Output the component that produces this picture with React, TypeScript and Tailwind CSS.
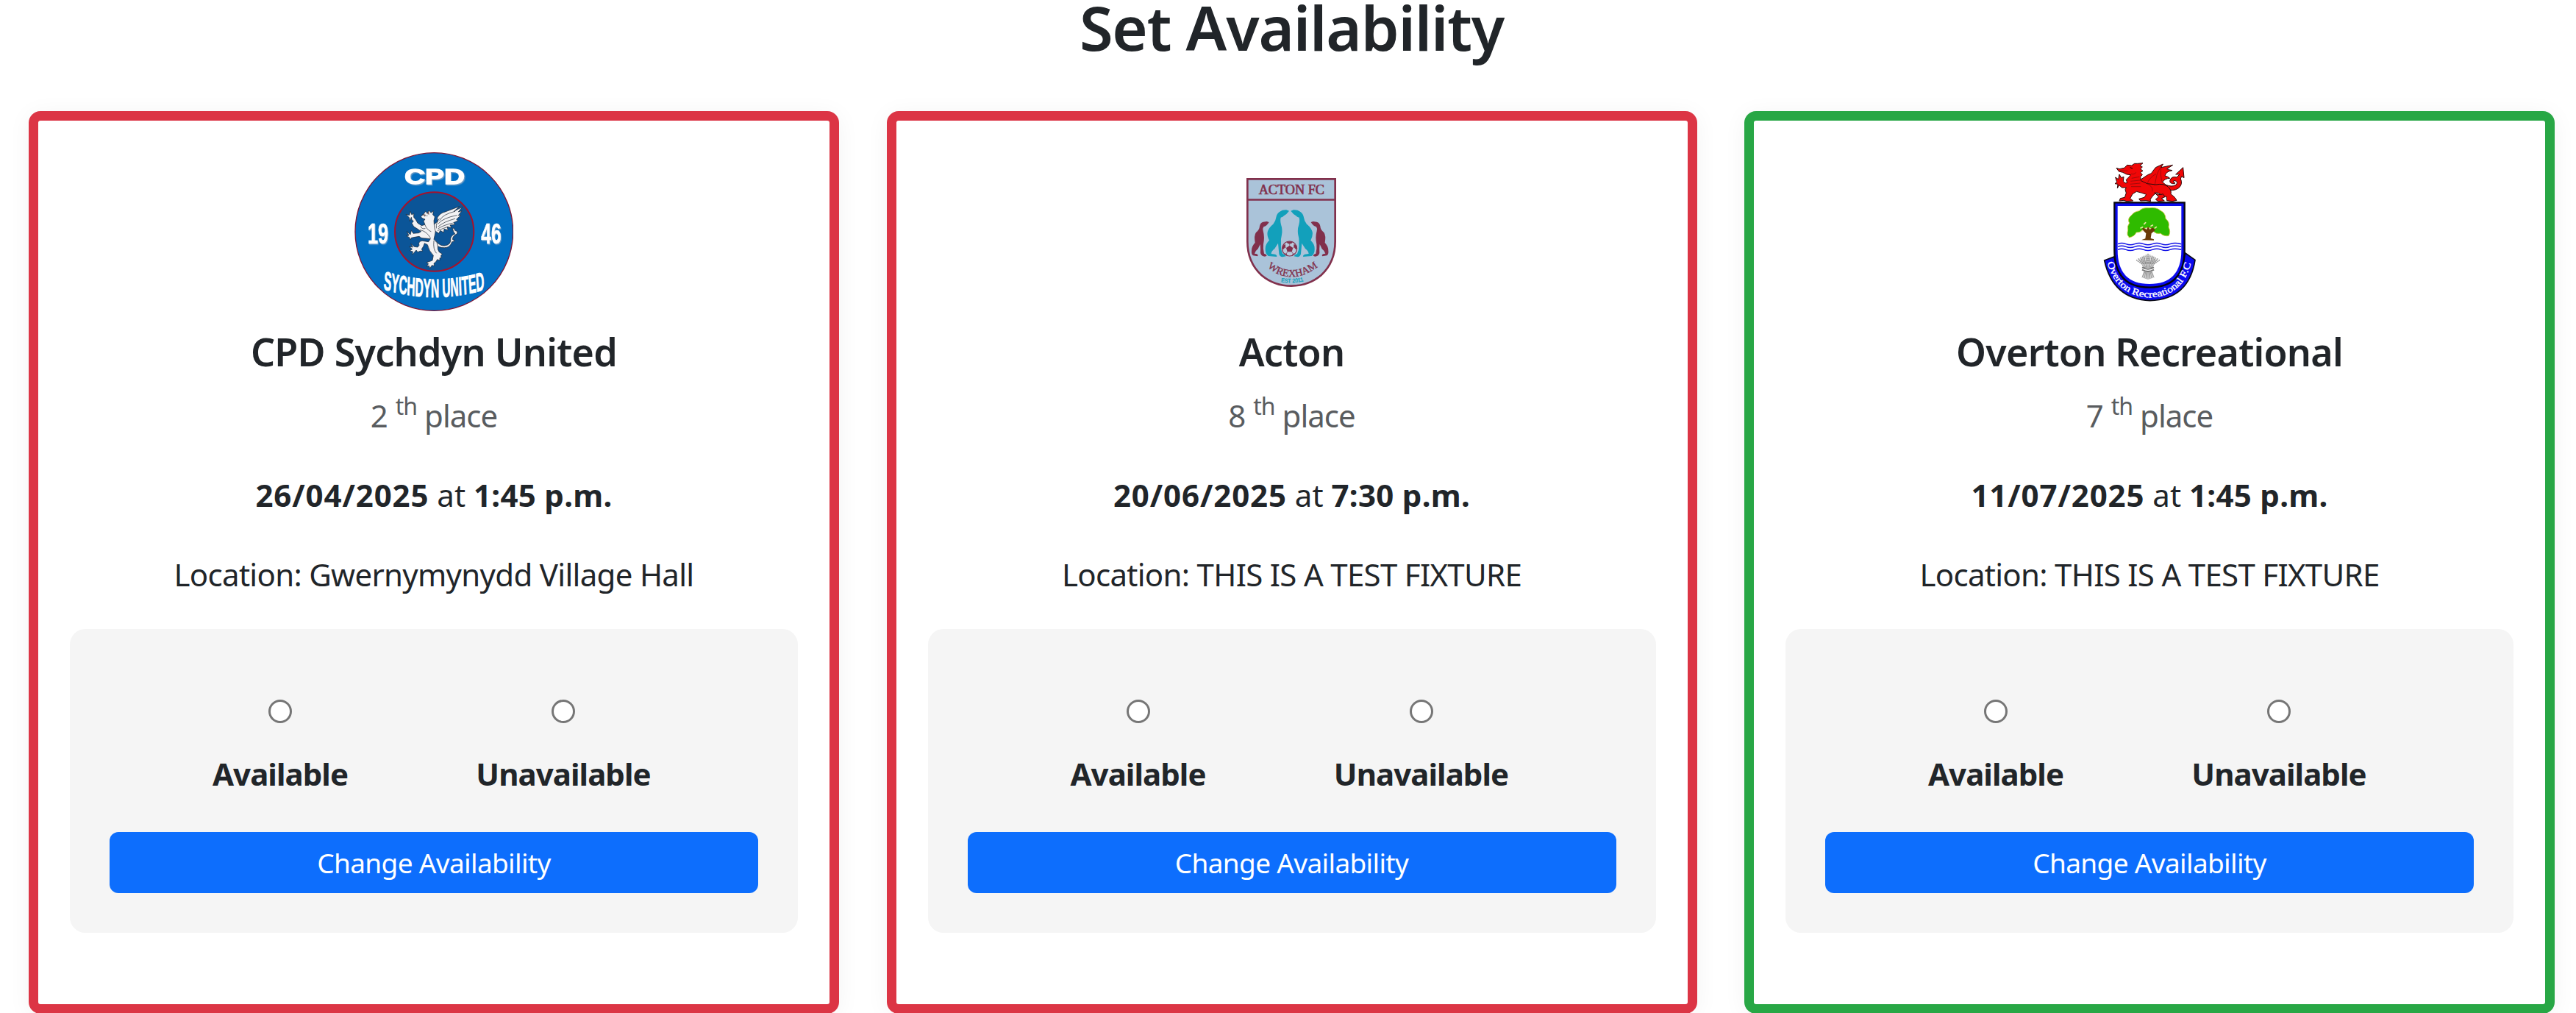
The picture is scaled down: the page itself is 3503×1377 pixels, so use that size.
import React from 'react';

function SychdynCrest() {
  return (
    <svg viewBox="36 36 648 648" className="size-[216px]" aria-label="CPD Sychdyn United crest">
      <circle cx="361" cy="360" r="322" fill="#0270c4" stroke="#7d1738" strokeWidth="4" />
      <circle cx="362" cy="360" r="161" fill="#0b5598" stroke="#a5122c" strokeWidth="6" />
      <g fontFamily="Liberation Sans" fontWeight="700" fill="#fff" stroke="#fff">
        <g fontSize="91" strokeWidth="4" className="drop-shadow-[4px_4px_0_#6f9dc6]">
          <text x="240" y="166" textLength="246" lengthAdjust="spacingAndGlyphs">CPD</text>
        </g>
        <g fontSize="118" strokeWidth="2" className="drop-shadow-[3px_4px_0_#6f9dc6]">
          <text x="90" y="408" textLength="84" lengthAdjust="spacingAndGlyphs">19</text>
          <text x="553" y="408" textLength="82" lengthAdjust="spacingAndGlyphs">46</text>
        </g>
        <path id="sychdyn-arc" d="M308 594 Q728 660 1148 594" fill="none" stroke="none" />
        <g transform="scale(.5 1)" fontSize="106" strokeWidth="3">
          <text textLength="830" lengthAdjust="spacingAndGlyphs"><textPath href="#sychdyn-arc" textLength="830" lengthAdjust="spacingAndGlyphs">SYCHDYN UNITED</textPath></text>
        </g>
      </g>
      <g transform="translate(210 195)" stroke="#17202c" strokeWidth="2" strokeLinejoin="round" strokeLinecap="round" fill="#f2f2f4">
        <path d="M158 204Q176 224 194 222Q222 218 218 194Q220 180 236 174L230 164L226 152L232 150L236 160L246 164L244 174L236 178Q226 186 226 196Q230 202 236 198Q232 208 224 206Q216 230 194 230Q170 232 154 214Z" />
        <path d="M148 138L166 122L164 108Q176 88 196 84L254 62L232 82L266 64L250 84L264 80L250 98L260 98L242 114L248 120L230 128L236 136L216 138L222 148L204 146L208 158L192 154L190 168L176 160L170 172L150 158Z" />
        <path d="M98 102L108 94L116 82L124 90L130 78L138 88L148 80L146 96L154 104L150 120L152 148Q160 162 154 178L150 196Q166 208 166 224Q164 238 172 248L184 256L178 264L182 270L174 272L174 282L164 278L158 288L150 294L152 304L142 302L134 314L130 304L120 306L128 296L120 290L134 286L144 282L148 262Q130 244 124 218L112 212Q108 226 100 236L104 244L94 244L84 248L78 240L68 252L62 258L64 246L52 242L62 236L50 226L64 228L56 214L70 226L84 228L90 220Q84 206 102 202L128 206L136 194L118 192Q98 194 90 184L72 187L58 190L54 198L50 188L38 182L48 180L40 164L54 177L58 160L66 172L88 170L98 164L84 154L68 144L60 130L67 122L60 116L58 106L52 122L50 108L36 94L50 98L54 82L60 96L68 90L68 106L76 116L84 130L100 140L114 136L108 122L114 114Q106 112 100 108Z" />
        <path d="M174 118Q186 94 236 82M168 132Q188 108 244 98M168 144Q190 124 236 112M168 152Q188 138 226 130M166 160L208 144M172 112Q158 128 160 150M114 138Q122 158 138 164M94 158Q120 162 136 190M96 144Q102 156 114 152M150 202Q146 238 160 252" fill="none" />
        <path d="M104 94L116 96L114 102ZM122 90L128 84L130 94Z" fill="#8c5a4d" strokeWidth="1" />
        <circle cx="122" cy="100" r="2" fill="#17202c" stroke="none" />
      </g>
    </svg>
  );
}

function ActonHounds() {
  return (
    <>
      <path
        fill="#12a0bb"
        d="M219 170L208 166Q192 165 181 173Q170 179 167 193Q165 210 154 224Q136 238 131 256Q128 272 138 290Q121 306 122 325Q121 345 134 354L168 357Q172 352 162 347L146 345Q146 335 160 324L174 302L178 345Q180 357 192 358L206 355Q204 348 193 345Q184 328 186 304Q184 286 189 268Q193 246 186 226Q181 206 186 196Q192 197 198 190Q208 185 219 170Z"
      />
      <path
        fill="#81304c"
        d="M137 216L128 213L113 215Q101 219 99 232Q98 248 84 258Q75 270 80 300Q66 314 66 332Q64 346 72 352L90 355Q95 350 87 346L78 344Q80 334 92 325L101 306Q103 322 102 342Q106 356 120 356L128 353Q126 346 117 344Q112 326 114 306Q120 276 113 252Q110 242 115 235Q128 232 137 216Z"
      />
    </>
  );
}

function ActonCrest() {
  return (
    <svg viewBox="-93 -69 648 648" className="size-[216px]" aria-label="Acton FC crest">
      <path d="M49 40H407V295Q407 380 350 432Q298 476 228 476Q158 476 106 432Q49 380 49 295Z" fill="#aac3d9" stroke="#81304c" strokeWidth="8" />
      <path d="M49 124.500H407" stroke="#81304c" strokeWidth="8" />
      <text x="95" y="101" fontFamily="Liberation Serif" fontSize="54" fill="#81304c" stroke="#81304c" strokeWidth="2" textLength="268" lengthAdjust="spacingAndGlyphs">ACTON FC</text>
      <ActonHounds />
      <g transform="translate(445 0) scale(-1 1)">
        <ActonHounds />
      </g>
      <circle cx="221" cy="324" r="30" fill="#b9cbdc" stroke="#81304c" strokeWidth="3.500" />
      <path d="M221 311L235 321L230 337H212L207 321Z" fill="#81304c" />
      <path d="M209 297Q221 292 234 297L228 304H214ZM193 312L203 305L205 314L197 326L191 324ZM250 312L239 305L237 314L245 326L251 324ZM198 342L209 345L213 353ZM244 342L234 345L229 353Z" fill="#81304c" />
      <path d="M221 311V303M235 321L241 317M230 337L236 346M212 337L207 346M207 321L201 317" stroke="#81304c" strokeWidth="2" />
      <path id="wrexham-arc" d="M130 400Q228 478 334 400" fill="none" />
      <text fontFamily="Liberation Serif" fontSize="42" fill="#81304c" stroke="#81304c" strokeWidth="1"><textPath href="#wrexham-arc" textLength="226" lengthAdjust="spacingAndGlyphs">WREXHAM</textPath></text>
      <path id="est-arc" d="M186 460Q234 467 280 456" fill="none" />
      <text fontFamily="Liberation Sans" fontSize="23" fill="#12a0bb" stroke="#12a0bb" strokeWidth="1"><textPath href="#est-arc" textLength="92" lengthAdjust="spacingAndGlyphs">EST 2011</textPath></text>
    </svg>
  );
}

function OvertonCrest() {
  const stalks = [-40, -32, -24, -16, -8, 0, 8, 16, 24, 32, 40];
  return (
    <svg viewBox="-90 -9 648 648" className="size-[216px]" aria-label="Overton Recreational crest">
      <path d="M50 432L90 417Q110 540 234 542Q358 540 380 402L420 430Q395 590 236 596Q85 590 50 432Z" fill="#0a0aee" stroke="#0b0b16" strokeWidth="5" />
      <path d="M91 196H377V390Q377 542 234 542Q91 542 91 390Z" fill="#0a0aee" stroke="#06060c" strokeWidth="7" />
      <path d="M104 210H364V390Q364 528 234 528Q104 528 104 390Z" fill="#fff" />
      <path d="M150 335Q140 330 146 308Q142 292 152 280Q142 262 160 248Q172 232 192 230Q204 216 232 218Q262 214 278 228Q300 238 300 262Q318 276 312 296Q322 316 312 332Q290 334 280 322Q262 326 250 314L244 302L228 298L210 302Q204 318 180 318Q174 334 150 339Z" fill="#2fbb00" stroke="#d9c94c" strokeWidth="2.500" />
      <path d="M201 349L217 343L220 322L204 306L208 298L222 306L228 294L236 306L246 297L258 308L242 322L239 342L252 346V350Z" fill="#6a3a08" />
      <path d="M198 300L206 296M212 284L218 278M240 292L247 288M256 300L262 296M206 310L200 314" stroke="#e8e6a0" strokeWidth="5" strokeLinecap="round" />
      <path d="M105 365Q120 358 138 365T174 365T210 365T246 365T282 365T318 365T364 365M105 376Q120 369 138 376T174 376T210 376T246 376T282 376T318 376T364 376M105 388Q120 381 138 388T174 388T210 388T246 388T282 388T318 388T364 388" fill="none" stroke="#1212e6" strokeWidth="4.500" />
      <g stroke="#6f6f6f" strokeWidth="2.200" fill="none">
        {stalks.map((s) => (
          <path key={s} d={`M${228 + s * 0.4} 462Q${228 + s * 0.7} 440 ${228 + s} ${404 + Math.abs(s) * 0.5}M${228 + s * 0.4} 478L${228 + s * 0.6} ${510 - Math.abs(s) * 0.2}`} />
        ))}
        {stalks.map((s) => (
          <path key={s} d={`M${228 + s * 0.6} 446L${228 + s * 1.2} ${406 + Math.abs(s) * 0.6}`} strokeWidth="5" strokeDasharray="3 2" stroke="#858585" />
        ))}
        <path d="M204 460Q228 474 252 460M204 470Q228 484 252 470" strokeWidth="6" stroke="#777" />
      </g>
      <path id="overton-arc" d="M62 441Q100 579 236 583Q376 580 408 424" fill="none" />
      <text fontFamily="Liberation Serif" fontSize="39" fill="#fff" stroke="#fff" strokeWidth="1"><textPath href="#overton-arc" textLength="480" lengthAdjust="spacingAndGlyphs">Overton Recreational F.C</textPath></text>
      <g transform="translate(75 15)" fill="#f00707" stroke="#2a0b0b" strokeWidth="3" strokeLinejoin="round">
        <path d="M206 110Q222 104 236 112Q258 118 270 106Q276 96 264 92Q256 90 256 96Q264 98 262 104Q242 106 242 92Q248 72 270 78L282 66L266 66L296 38L300 80L290 74L286 84Q296 106 278 122Q254 138 226 126Z" />
        <path d="M122 88L152 68L166 62L184 38L214 24L206 38L254 28L230 44Q238 48 252 50Q226 54 222 72Q234 74 242 82Q222 82 212 98Q220 102 228 112Q210 104 200 118L150 124L118 120Z" />
        <path d="M24 40L36 44L56 40L68 28L86 30L98 22L110 22L132 20L120 31L130 36L122 44L132 52L122 58L130 68L122 76L124 92L150 104L186 108Q216 102 234 116Q250 130 246 146L262 160L270 172L252 176L230 173L228 158L206 148L188 140L174 152L162 168L164 176L144 173L122 174L116 166L138 160L146 148L128 142L106 136L90 146L80 164L92 174L66 176L54 172L36 174L40 164L58 160L64 142L60 128L64 120L46 120L36 110L28 122L30 106L18 104L26 98L20 78L32 86L36 66L44 80L54 76L52 94L60 102L68 100L64 88L76 76L82 68L66 66L50 58L34 54Z" />
        <path d="M180 140Q198 154 214 146L222 158L208 164L220 174L194 176L184 168L196 158Z" />
        <path d="M214 24Q190 54 186 82L180 112M186 64Q160 78 150 102M206 40Q202 68 210 98M84 64Q98 68 104 58M86 82L118 76M82 94L120 90M80 106L122 102M84 116L124 116M150 104Q176 118 170 136M38 50L70 52" fill="none" stroke="#7a0c0c" strokeWidth="2" />
        <path d="M80 38L90 42" stroke="#000" />
      </g>
    </svg>
  );
}

interface Fixture {
  id: string;
  team: string;
  position: number;
  date: string;
  time: string;
  location: string;
  available: boolean;
  Crest: () => React.JSX.Element;
}

const fixtures: Fixture[] = [
  { id: 'sychdyn', team: 'CPD Sychdyn United', position: 2, date: '26/04/2025', time: '1:45 p.m.', location: 'Gwernymynydd Village Hall', available: false, Crest: SychdynCrest },
  { id: 'acton', team: 'Acton', position: 8, date: '20/06/2025', time: '7:30 p.m.', location: 'THIS IS A TEST FIXTURE', available: false, Crest: ActonCrest },
  { id: 'overton', team: 'Overton Recreational', position: 7, date: '11/07/2025', time: '1:45 p.m.', location: 'THIS IS A TEST FIXTURE', available: true, Crest: OvertonCrest },
];

function Choice({ name, label }: { name: string; label: string }) {
  return (
    <label className="flex w-[385px] flex-col items-center gap-[37px]">
      <input type="radio" name={name} className="size-8 appearance-none rounded-full border-[3px] border-[#767676] bg-white" />
      <span className="text-[42px] leading-[64px] font-bold tracking-[-0.95px]">{label}</span>
    </label>
  );
}

function FixtureCard({ fixture }: { fixture: Fixture }) {
  const { id, team, position, date, time, location, available, Crest } = fixture;
  return (
    <article
      className={`flex h-[1227px] flex-1 flex-col items-center rounded-[16px] border-[13px] bg-white px-[43px] pt-[43px] shadow-[0_4px_32px_rgba(0,0,0,0.05)] ${
        available ? 'border-[#28a745]' : 'border-[#dc3545]'
      }`}
    >
      <Crest />
      <h2 className="mt-6 text-[52px] leading-[62px] font-semibold tracking-[-0.75px]">{team}</h2>
      <p className="mt-6 h-16 text-[42px] leading-[64px] tracking-[-1px] text-[#595c5f]">
        {position} <span className="relative -top-[17px] ml-[1px] text-[32px] leading-none">th</span> place
      </p>
      <p className="mt-[43px] text-[42px] leading-[66px]">
        <b className="tracking-[0.9px]">{date}</b> at <b className="tracking-[0.3px]">{time}</b>
      </p>
      <p className="mt-[42px] text-[42px] leading-[65px] tracking-[-0.7px]">Location: {location}</p>
      <form className="mt-[42px] flex h-[413px] w-full flex-col rounded-[21px] bg-[#f5f5f5] px-[54px] pt-24">
        <div className="flex justify-center pr-[33px]">
          <Choice name={id} label="Available" />
          <Choice name={id} label="Unavailable" />
        </div>
        <button type="button" className="mt-[47px] h-[83px] w-full rounded-[12px] bg-[#0d6efd] pt-px text-[37px] tracking-[-0.65px] text-white">
          Change Availability
        </button>
      </form>
    </article>
  );
}

export default function App() {
  return (
    <main className="h-[1377px] w-full overflow-hidden bg-white font-['Noto_Sans',sans-serif] text-[#212529]">
      <h1 className="pl-[10px] text-center text-[83px] leading-[73px] font-semibold tracking-[-1.2px]">Set Availability</h1>
      <section className="mt-[78px] flex gap-[64.5px] pr-[29px] pl-[39px]">
        {fixtures.map((fixture) => (
          <FixtureCard key={fixture.id} fixture={fixture} />
        ))}
      </section>
    </main>
  );
}
